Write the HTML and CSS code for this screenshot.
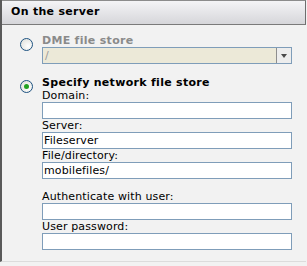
FILE: index.html
```html
<!DOCTYPE html>
<html lang="en">

<head>
    <meta charset="UTF-8">
    <title>On the server</title>
    <link rel="stylesheet" href="styles.css">
</head>

<body>
    <div class="panel">
        <div class="panel-header">On the server</div>
        <div class="panel-body">
            <div class="option">
                <div class="radio-col"><span class="radio"></span></div>
                <div class="fields">
                    <div class="option-title disabled">DME file store</div>
                    <div class="select">
                        <span class="select-value">/</span>
                        <span class="select-btn"><span class="arrow"></span></span>
                    </div>
                </div>
            </div>
            <div class="option second">
                <div class="radio-col"><span class="radio checked"></span></div>
                <div class="fields">
                    <div class="option-title">Specify network file store</div>
                    <label class="field-label">Domain:</label>
                    <input class="text" type="text" value="">
                    <label class="field-label">Server:</label>
                    <input class="text" type="text" value="Fileserver">
                    <label class="field-label">File/directory:</label>
                    <input class="text" type="text" value="mobilefiles/">
                    <label class="field-label gap">Authenticate with user:</label>
                    <input class="text" type="text" value="">
                    <label class="field-label">User password:</label>
                    <input class="text" type="password" value="">
                </div>
            </div>
        </div>
    </div>
</body>

</html>
```

FILE: styles.css
```css
body {
    margin: 0;
    background: #f2f2f2;
    font-family: "DejaVu Sans", Verdana, sans-serif;
    font-size: 11px;
    letter-spacing: 0.13px;
    color: #000;
}

.panel {
    width: 306px;
    height: 262px;
    border-left: 2px solid #5a5a5a;
    border-bottom: 1px solid #dcdcdc;
    box-sizing: border-box;
    background: #f2f2f2;
}

.panel-header {
    height: 25px;
    box-sizing: border-box;
    border-top: 1px solid #8c8c8c;
    border-right: 1px solid #6e6e6e;
    border-bottom: 1px solid #7a7a7a;
    background: linear-gradient(#f4f4f6, #d6d6da);
    font-weight: bold;
    font-size: 11px;
    letter-spacing: 0.3px;
    line-height: 22px;
    padding-left: 9px;
}

.panel-body {
    padding-top: 9px;
}

.option {
    display: flex;
}

.option.second {
    margin-top: 12px;
}

.radio-col {
    width: 40px;
    flex: none;
}

.radio {
    display: block;
    box-sizing: border-box;
    width: 13px;
    height: 13px;
    margin: 4px 0 0 18px;
    border: 1px solid #1d5281;
    border-radius: 50%;
    background: radial-gradient(circle at 65% 65%, #ffffff, #dcdcd6);
    position: relative;
}

.radio.checked::after {
    content: "";
    position: absolute;
    left: 3px;
    top: 3px;
    width: 5px;
    height: 5px;
    border-radius: 50%;
    background: #21a121;
}

.fields {
    width: 250px;
}

.option-title {
    font-weight: bold;
    letter-spacing: 0.3px;
    line-height: 13px;
}

.option-title.disabled {
    color: #8a8a8a;
}

.select {
    display: flex;
    height: 17px;
    box-sizing: border-box;
    border: 1px solid #7f9db9;
    background: #ece9d8;
}

.select-value {
    flex: 1;
    color: #9a9a9a;
    line-height: 15px;
    padding-left: 2px;
}

.select-btn {
    width: 14px;
    border-left: 1px solid #8e8e8e;
    background: #ededed;
    display: flex;
    align-items: center;
    justify-content: center;
}

.arrow {
    width: 0;
    height: 0;
    border-left: 3px solid transparent;
    border-right: 3px solid transparent;
    border-top: 4px solid #4a4a4a;
}

.field-label {
    display: block;
    line-height: 13px;
}

.field-label.gap {
    margin-top: 11px;
}

.text {
    display: block;
    width: 250px;
    height: 17px;
    box-sizing: border-box;
    margin: 0;
    padding: 0 1px;
    border: 1px solid #7f9db9;
    background: #fff;
    font-family: "DejaVu Sans", Verdana, sans-serif;
    font-size: 11px;
    letter-spacing: 0.13px;
    color: #000;
    outline: none;
}
```
